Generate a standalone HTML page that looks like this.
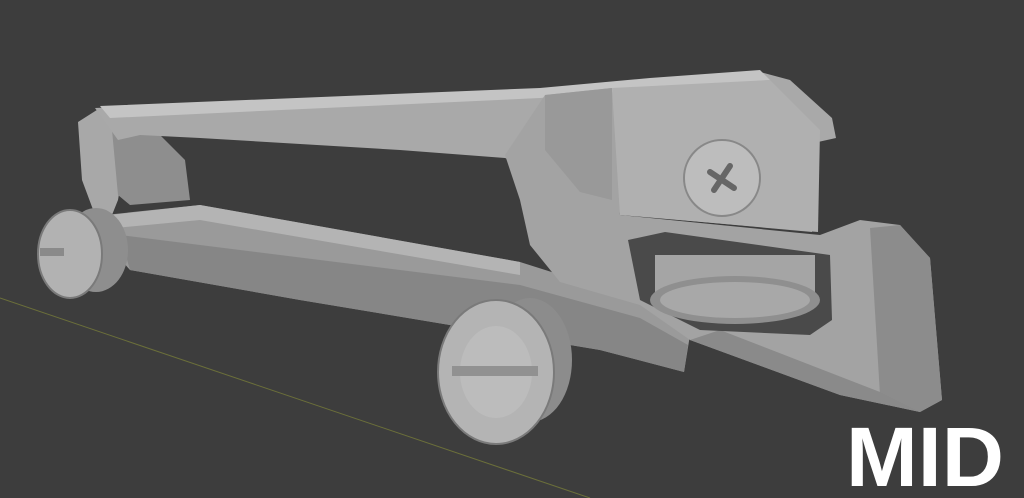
<!DOCTYPE html>
<html><head><meta charset="utf-8"><style>
html,body{margin:0;padding:0;background:#3d3d3d;width:1024px;height:498px;overflow:hidden}
svg{display:block}
.t{font-family:"Liberation Sans",sans-serif;font-weight:bold;fill:#fff}
</style></head><body>
<svg width="1024" height="498" viewBox="0 0 1024 498">
<rect width="1024" height="498" fill="#3d3d3d"/>
<line x1="0" y1="298" x2="590" y2="498" stroke="#6b6f3a" stroke-width="1"/>
<polygon points="105,215 200,205 520,262 640,300 690,335 684,372 600,350 300,300 130,270 108,245" fill="#9a9a9a"/>
<polygon points="120,235 520,285 640,318 688,345 684,372 600,350 300,300 130,270" fill="#868686"/>
<polygon points="110,215 200,205 520,262 520,275 200,220 115,228" fill="#b4b4b4"/>
<polygon points="78,122 100,108 135,112 128,140 118,200 110,220 95,215 82,180" fill="#a8a8a8"/>
<polygon points="112,130 160,135 185,160 190,200 130,205 118,195" fill="#8e8e8e"/>
<polygon points="95,108 540,90 650,80 760,72 790,80 832,118 836,138 818,142 812,232 625,215 580,195 540,172 505,158 400,150 200,138 140,135 118,140" fill="#a9a9a9"/>
<polygon points="100,106 540,88 650,78 760,70 770,80 540,98 110,118" fill="#c4c4c4"/>
<polygon points="505,155 545,95 612,88 620,215 820,235 860,220 900,225 930,258 942,400 920,412 840,395 690,340 640,305 560,282 530,245 520,200" fill="#a3a3a3"/>
<polygon points="612,88 770,80 820,130 818,232 620,215" fill="#b0b0b0"/>
<polygon points="545,95 612,88 612,200 580,192 545,150" fill="#999"/>
<polygon points="870,228 900,225 930,258 942,400 920,412 880,395" fill="#8c8c8c"/>
<polygon points="690,340 840,395 920,412 880,392 720,330" fill="#8a8a8a"/>
<polygon points="628,240 665,232 830,255 832,320 810,335 700,330 640,300" fill="#4a4a4a"/>
<ellipse cx="735" cy="278" rx="80" ry="22" fill="#9c9c9c"/>
<rect x="655" y="255" width="160" height="45" fill="#a5a5a5"/>
<ellipse cx="735" cy="300" rx="85" ry="24" fill="#8f8f8f"/>
<ellipse cx="735" cy="300" rx="75" ry="18" fill="#a8a8a8"/>
<circle cx="722" cy="178" r="38" fill="#bdbdbd" stroke="#888" stroke-width="2"/>
<path d="M710 172 L734 188 M730 166 L714 190" stroke="#666" stroke-width="6" stroke-linecap="round"/>
<ellipse cx="96" cy="250" rx="32" ry="42" fill="#8e8e8e"/>
<ellipse cx="70" cy="254" rx="32" ry="44" fill="#b2b2b2" stroke="#7a7a7a" stroke-width="2"/>
<rect x="40" y="248" width="24" height="8" fill="#8a8a8a"/>
<ellipse cx="530" cy="360" rx="42" ry="62" fill="#8c8c8c"/>
<ellipse cx="496" cy="372" rx="58" ry="72" fill="#b4b4b4" stroke="#7a7a7a" stroke-width="2"/>
<ellipse cx="496" cy="372" rx="36" ry="46" fill="#bcbcbc"/>
<rect x="452" y="366" width="86" height="10" fill="#919191"/>
<text class="t" x="846" y="486" font-size="84" textLength="158" lengthAdjust="spacingAndGlyphs">MID</text>
</svg>
</body></html>
